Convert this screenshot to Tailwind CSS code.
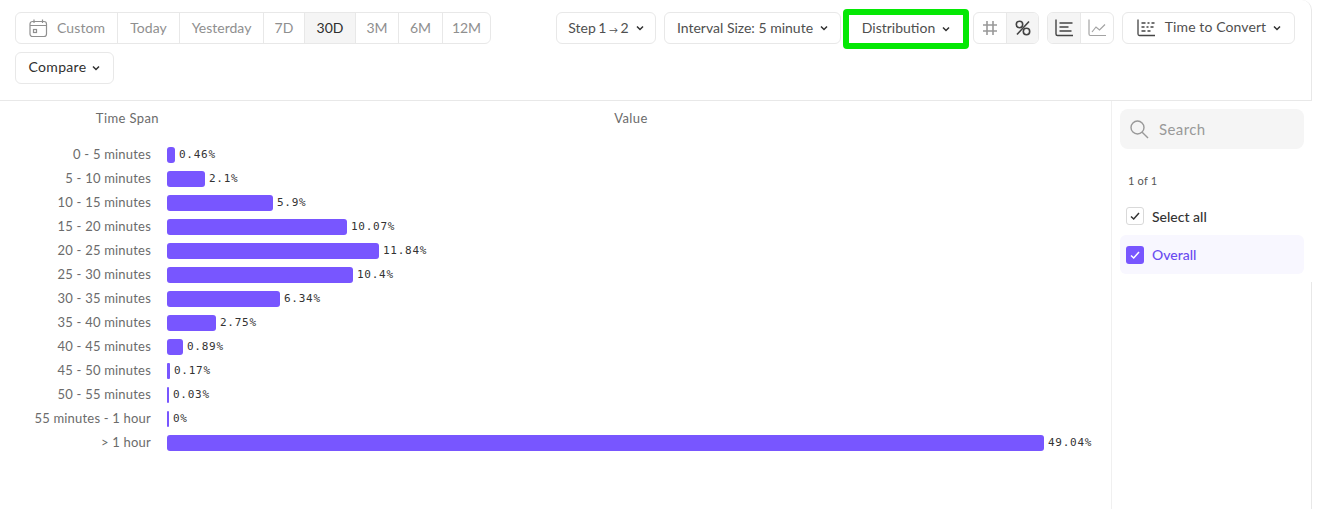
<!DOCTYPE html>
<html lang="en">
  <head>
    <meta charset="UTF-8" />
    <title>Funnel Time to Convert</title>
    <script src="https://cdn.jsdelivr.net/npm/@tailwindcss/browser@4"></script>
  </head>
  <body class="bg-white font-['Lato','Liberation_Sans',sans-serif] text-[14px] text-[#6b6b6b] h-[509px] overflow-hidden">
    <!-- Toolbar -->
    <header class="h-[101px] w-[1312px] border-b border-r border-[#e8e8e8] rounded-tr-[10px] flex justify-between pl-[15px] pr-[16px] pt-[12px]">
      <div class="flex flex-col gap-2 items-start">
        <div class="flex h-8 border border-[#e8e8e8] rounded-[6px] text-[#8f8f8f] overflow-hidden">
          <div class="w-[102px] flex items-center gap-[9px] pl-[13px] pb-[2px] border-r border-[#e8e8e8]">
            <svg class="w-[19px] h-[19px] mt-[2px]" viewBox="0 0 19 19" fill="none" stroke="#8f8f8f" stroke-width="1.2">
              <rect x="1" y="2.5" width="16.5" height="15" rx="2.5" />
              <path d="M1 6.5h16.5M5 .5v3.5M13.5 .5v3.5" />
              <rect x="4.5" y="10.5" width="3" height="3" />
            </svg>
            <span class="tracking-[0.1px]">Custom</span>
          </div>
          <div class="w-[62px] flex items-center justify-center pb-[2px] border-r border-[#e8e8e8]">Today</div>
          <div class="w-[84px] flex items-center justify-center pb-[2px] border-r border-[#e8e8e8]">Yesterday</div>
          <div class="w-[41px] flex items-center justify-center pb-[2px] border-r border-[#e8e8e8]">7D</div>
          <div class="w-[51px] flex items-center justify-center pb-[2px] border-r border-[#e8e8e8] bg-[#f5f5f5] text-[#2f2f2f]">30D</div>
          <div class="w-[43px] flex items-center justify-center pb-[2px] border-r border-[#e8e8e8]">3M</div>
          <div class="w-[44px] flex items-center justify-center pb-[2px] border-r border-[#e8e8e8]">6M</div>
          <div class="w-[47px] flex items-center justify-center pb-[2px]">12M</div>
        </div>
        <button class="w-[99px] h-8 border border-[#e8e8e8] rounded-[6px] flex items-center justify-center gap-[6px] text-[#2f2f2f]">
          <span class="-mt-[3px] tracking-[0.3px]">Compare</span>
          <svg class="w-2 h-2" viewBox="0 0 8 8" fill="none" stroke="currentColor" stroke-width="1.5"><path d="M1 2.5l3 3 3-3" /></svg>
        </button>
      </div>
      <div class="flex items-start gap-2">
        <button class="w-[100px] h-8 border border-[#e8e8e8] rounded-[6px] flex items-center justify-center gap-[7px] text-[#4f4f4f]">
          <span class="-mt-[2px] [word-spacing:-1px]">Step 1 <span class="text-[9px]">→</span> 2</span>
          <svg class="w-2 h-2" viewBox="0 0 8 8" fill="none" stroke="#2f2f2f" stroke-width="1.5"><path d="M1 2.5l3 3 3-3" /></svg>
        </button>
        <button class="w-[177px] h-8 border border-[#e8e8e8] rounded-[6px] flex items-center justify-center gap-[7px] text-[#4f4f4f]">
          <span class="-mt-[2px]">Interval Size: 5 minute</span>
          <svg class="w-2 h-2" viewBox="0 0 8 8" fill="none" stroke="#2f2f2f" stroke-width="1.5"><path d="M1 2.5l3 3 3-3" /></svg>
        </button>
        <button class="w-[126px] h-[40px] -ml-[6px] -mr-[4px] -mt-[3px] border-[6px] border-[#04e804] rounded-[4px] flex items-center justify-center gap-[7px] text-[#4f4f4f]">
          <span class="-mt-[3px]">Distribution</span>
          <svg class="w-2 h-2" viewBox="0 0 8 8" fill="none" stroke="#2f2f2f" stroke-width="1.5"><path d="M1 2.5l3 3 3-3" /></svg>
        </button>
        <div class="flex h-8 border border-[#e8e8e8] rounded-[6px] overflow-hidden">
          <div class="w-[33px] flex items-center justify-center border-r border-[#e8e8e8]">
            <svg class="w-[18px] h-[18px]" viewBox="0 0 18 18" fill="none" stroke="#999" stroke-width="1.6"><path d="M6 2v14M12 2v14M2 6h14M2 12h14" /></svg>
          </div>
          <div class="w-[31px] flex items-center justify-center bg-[#f5f5f5]">
            <svg class="w-[18px] h-[18px]" viewBox="0 0 18 18" fill="none" stroke="#444" stroke-width="1.6"><circle cx="5.5" cy="5.5" r="3.2" /><circle cx="12.5" cy="12.5" r="3.2" /><path d="M3 15.5L15 2.5" /></svg>
          </div>
        </div>
        <div class="flex h-8 border border-[#e8e8e8] rounded-[6px] overflow-hidden">
          <div class="w-[33px] flex items-center justify-center border-r border-[#e8e8e8] bg-[#f5f5f5]">
            <svg class="w-[20px] h-[20px]" viewBox="0 0 20 20" fill="none" stroke="#444" stroke-width="1.4"><path d="M2 1.5V16a1.5 1.5 0 0 0 1.5 1.5H19M5.5 5h13M5.5 9h9M5.5 13h12" /></svg>
          </div>
          <div class="w-[32px] flex items-center justify-center">
            <svg class="w-[20px] h-[20px]" viewBox="0 0 20 20" fill="none" stroke="#a3a3a3" stroke-width="1.2"><path d="M2 1.5V16a1.5 1.5 0 0 0 1.5 1.5H19M5 14l4-5 3.5 3L18 6.5" /></svg>
          </div>
        </div>
        <button class="w-[173px] h-8 border border-[#e8e8e8] rounded-[6px] flex items-center justify-center gap-[7px] text-[#4f4f4f]">
          <svg class="w-[20px] h-[20px] mr-[2px]" viewBox="0 0 20 20" fill="none" stroke="#444" stroke-width="1.3"><path d="M2 1.5V16a1.5 1.5 0 0 0 1.5 1.5H19" /><path d="M5.5 5h4M11.5 5h2M15.5 5h3M5.5 9h3M10.5 9h2M14.5 9h3M5.5 13h4M11.5 13h3" /></svg>
          <span class="-mt-[3px] tracking-[0.1px]">Time to Convert</span>
          <svg class="w-2 h-2" viewBox="0 0 8 8" fill="none" stroke="#2f2f2f" stroke-width="1.5"><path d="M1 2.5l3 3 3-3" /></svg>
        </button>
      </div>
    </header>

    <div class="flex h-[408px]">
      <!-- Chart -->
      <main class="w-[1111px] shrink-0 text-[13px] tracking-[0.2px] pt-[8px]">
        <div class="flex h-5 items-center tracking-[0.4px]">
          <div class="w-[159px] text-right">Time Span</div>
          <div class="w-[944px] text-center">Value</div>
        </div>
        <div class="mt-[18px] flex flex-col gap-2">
          <div class="flex items-center h-4 gap-4"><div class="w-[151px] text-right">0 - 5 minutes</div><div class="flex items-center gap-1"><div class="w-[8px] h-4 rounded-[3px] bg-[#7856ff]"></div><span class="mt-px font-['DejaVu_Sans_Mono',monospace] text-[11px] tracking-[0.75px] text-[#333]">0.46%</span></div></div>
          <div class="flex items-center h-4 gap-4"><div class="w-[151px] text-right">5 - 10 minutes</div><div class="flex items-center gap-1"><div class="w-[38px] h-4 rounded-[3px] bg-[#7856ff]"></div><span class="mt-px font-['DejaVu_Sans_Mono',monospace] text-[11px] tracking-[0.75px] text-[#333]">2.1%</span></div></div>
          <div class="flex items-center h-4 gap-4"><div class="w-[151px] text-right">10 - 15 minutes</div><div class="flex items-center gap-1"><div class="w-[106px] h-4 rounded-[3px] bg-[#7856ff]"></div><span class="mt-px font-['DejaVu_Sans_Mono',monospace] text-[11px] tracking-[0.75px] text-[#333]">5.9%</span></div></div>
          <div class="flex items-center h-4 gap-4"><div class="w-[151px] text-right">15 - 20 minutes</div><div class="flex items-center gap-1"><div class="w-[180px] h-4 rounded-[3px] bg-[#7856ff]"></div><span class="mt-px font-['DejaVu_Sans_Mono',monospace] text-[11px] tracking-[0.75px] text-[#333]">10.07%</span></div></div>
          <div class="flex items-center h-4 gap-4"><div class="w-[151px] text-right">20 - 25 minutes</div><div class="flex items-center gap-1"><div class="w-[212px] h-4 rounded-[3px] bg-[#7856ff]"></div><span class="mt-px font-['DejaVu_Sans_Mono',monospace] text-[11px] tracking-[0.75px] text-[#333]">11.84%</span></div></div>
          <div class="flex items-center h-4 gap-4"><div class="w-[151px] text-right">25 - 30 minutes</div><div class="flex items-center gap-1"><div class="w-[186px] h-4 rounded-[3px] bg-[#7856ff]"></div><span class="mt-px font-['DejaVu_Sans_Mono',monospace] text-[11px] tracking-[0.75px] text-[#333]">10.4%</span></div></div>
          <div class="flex items-center h-4 gap-4"><div class="w-[151px] text-right">30 - 35 minutes</div><div class="flex items-center gap-1"><div class="w-[113px] h-4 rounded-[3px] bg-[#7856ff]"></div><span class="mt-px font-['DejaVu_Sans_Mono',monospace] text-[11px] tracking-[0.75px] text-[#333]">6.34%</span></div></div>
          <div class="flex items-center h-4 gap-4"><div class="w-[151px] text-right">35 - 40 minutes</div><div class="flex items-center gap-1"><div class="w-[49px] h-4 rounded-[3px] bg-[#7856ff]"></div><span class="mt-px font-['DejaVu_Sans_Mono',monospace] text-[11px] tracking-[0.75px] text-[#333]">2.75%</span></div></div>
          <div class="flex items-center h-4 gap-4"><div class="w-[151px] text-right">40 - 45 minutes</div><div class="flex items-center gap-1"><div class="w-[16px] h-4 rounded-[3px] bg-[#7856ff]"></div><span class="mt-px font-['DejaVu_Sans_Mono',monospace] text-[11px] tracking-[0.75px] text-[#333]">0.89%</span></div></div>
          <div class="flex items-center h-4 gap-4"><div class="w-[151px] text-right">45 - 50 minutes</div><div class="flex items-center gap-1"><div class="w-[3px] h-4 rounded-[1px] bg-[#7856ff]"></div><span class="mt-px font-['DejaVu_Sans_Mono',monospace] text-[11px] tracking-[0.75px] text-[#333]">0.17%</span></div></div>
          <div class="flex items-center h-4 gap-4"><div class="w-[151px] text-right">50 - 55 minutes</div><div class="flex items-center gap-1"><div class="w-[2px] h-4 rounded-[1px] bg-[#7856ff]"></div><span class="mt-px font-['DejaVu_Sans_Mono',monospace] text-[11px] tracking-[0.75px] text-[#333]">0.03%</span></div></div>
          <div class="flex items-center h-4 gap-4"><div class="w-[151px] text-right">55 minutes - 1 hour</div><div class="flex items-center gap-1"><div class="w-[2px] h-4 rounded-[1px] bg-[#7856ff]"></div><span class="mt-px font-['DejaVu_Sans_Mono',monospace] text-[11px] tracking-[0.75px] text-[#333]">0%</span></div></div>
          <div class="flex items-center h-4 gap-4"><div class="w-[151px] text-right">&gt; 1 hour</div><div class="flex items-center gap-1"><div class="w-[877px] h-4 rounded-[3px] bg-[#7856ff]"></div><span class="mt-px font-['DejaVu_Sans_Mono',monospace] text-[11px] tracking-[0.75px] text-[#333]">49.04%</span></div></div>
        </div>
      </main>

      <!-- Legend -->
      <aside class="w-[201px] border-l border-[#f0f0f0] relative pl-[8px] pr-[8px] pt-[8px]">
        <div class="h-10 rounded-[8px] bg-[#f5f5f5] flex items-center gap-[10px] pl-[9px] text-[#999] text-[15px] tracking-[0.4px]">
          <svg class="w-[20px] h-[20px]" viewBox="0 0 20 20" fill="none" stroke="#999" stroke-width="1.4"><circle cx="8.5" cy="8.5" r="6.5" /><path d="M13.2 13.2L19 19" /></svg>
          Search
        </div>
        <div class="mt-[24px] pl-[8px] text-[11px] tracking-[0.2px] text-[#555] leading-4">1 of 1</div>
        <div class="mt-[8px] h-[38px] flex items-center gap-[8px] pl-[6px] text-[#333] font-medium text-[14px]">
          <span class="w-[18px] h-[18px] border border-[#d9d9d9] rounded-[3px] flex items-center justify-center">
            <svg class="w-[10px] h-[10px]" viewBox="0 0 10 10" fill="none" stroke="#333" stroke-width="1.5"><path d="M1 5.5l2.7 2.5L9 2" /></svg>
          </span>
          Select all
        </div>
        <div class="h-[39px] rounded-[6px] bg-[#f8f7ff] flex items-center gap-[8px] pl-[6px] text-[#6a4cf0] font-medium text-[14px]">
          <span class="w-[18px] h-[18px] bg-[#7856ff] rounded-[3px] flex items-center justify-center">
            <svg class="w-[10px] h-[10px]" viewBox="0 0 10 10" fill="none" stroke="#fff" stroke-width="1.5"><path d="M1 5.5l2.7 2.5L9 2" /></svg>
          </span>
          Overall
        </div>
        <div class="absolute left-[199px] top-[181px] bottom-0 w-px bg-[#e8e8e8]"></div>
      </aside>
    </div>
  </body>
</html>
